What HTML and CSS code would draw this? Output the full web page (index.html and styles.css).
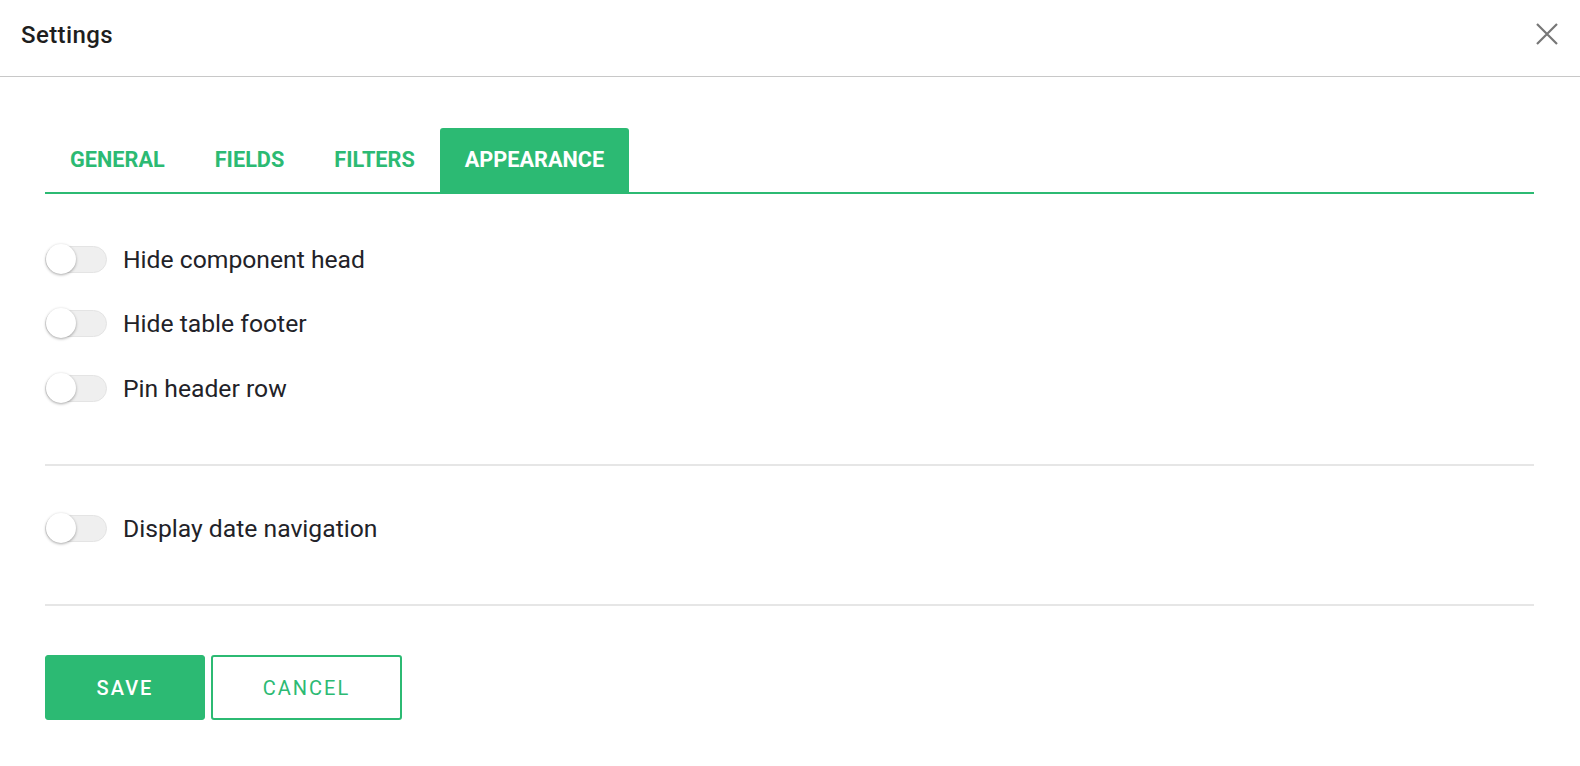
FILE: index.html
```html
<!DOCTYPE html>
<html lang="en">
<head>
  <meta charset="UTF-8" />
  <title>Settings</title>
  <link rel="stylesheet" href="styles.css">
</head>
<body>
  <header class="modal-head">
    <h2>Settings</h2>
    <button class="close-btn" aria-label="Close">
      <svg width="22" height="22" viewBox="0 0 22 22">
        <path d="M1 1 L21 21 M21 1 L1 21" stroke="#777" stroke-width="2.2" fill="none" />
      </svg>
    </button>
  </header>

  <div class="content">
    <nav class="tabs">
      <a href="#" class="tab">General</a>
      <a href="#" class="tab">Fields</a>
      <a href="#" class="tab">Filters</a>
      <a href="#" class="tab active">Appearance</a>
    </nav>

    <div class="section first">
      <label class="row"><span class="toggle"><span class="knob"></span></span>Hide component head</label>
      <label class="row"><span class="toggle"><span class="knob"></span></span>Hide table footer</label>
      <label class="row"><span class="toggle"><span class="knob"></span></span>Pin header row</label>
    </div>

    <div class="section">
      <label class="row"><span class="toggle"><span class="knob"></span></span>Display date navigation</label>
    </div>

    <div class="actions">
      <button class="btn save">Save</button>
      <button class="btn cancel">Cancel</button>
    </div>
  </div>
</body>
</html>
```

FILE: styles.css
```css
body {
  margin: 0;
  padding: 0;
  background: white;
  font-family: Roboto, "Liberation Sans", sans-serif;
  color: #222228;
}
.modal-head {
  height: 76px;
  display: flex;
  align-items: center;
  justify-content: space-between;
  padding: 0 22px 0 21px;
  border-bottom: 1px solid #c8c8c8;
}
.modal-head h2 {
  margin: 0;
  font-size: 24px;
  font-weight: 500;
  letter-spacing: 0.4px;
  color: #1e1e1e;
  margin-top: -6px;
}
.close-btn {
  background: none;
  border: none;
  padding: 0;
  width: 22px;
  height: 22px;
  cursor: pointer;
  margin-top: -8px;
}
.content {
  padding: 0 46px 0 45px;
}
.tabs {
  display: flex;
  margin-top: 51px;
  border-bottom: 2px solid #2cba73;
}
.tab {
  height: 64px;
  box-sizing: border-box;
  padding: 0 25px 2px;
  display: flex;
  align-items: center;
  text-decoration: none;
  text-transform: uppercase;
  font-size: 21.7px;
  font-weight: 700;
  color: #2cba73;
}
.tab.active {
  background: #2cba73;
  color: white;
  border-radius: 3px 3px 0 0;
}
.section {
  padding: 31px 0 43px;
  border-bottom: 2px solid #e6e6e6;
}
.section.first {
  padding-top: 33px;
}
.row {
  height: 64.5px;
  display: flex;
  align-items: center;
  font-size: 24.7px;
  cursor: pointer;
}
.toggle {
  position: relative;
  width: 62px;
  height: 27px;
  border-radius: 14px;
  background: #efefef;
  border: 1px solid #e4e4e4;
  box-sizing: border-box;
  margin-right: 16px;
}
.knob {
  position: absolute;
  left: 0;
  top: -3px;
  width: 30px;
  height: 30px;
  border-radius: 50%;
  background: white;
  box-shadow: 0 1px 3px rgba(0, 0, 0, 0.35);
}
.actions {
  display: flex;
  gap: 6px;
  margin-top: 49px;
}
.btn {
  height: 65px;
  border-radius: 3px;
  font-family: Roboto, "Liberation Sans", sans-serif;
  font-size: 20px;
  text-transform: uppercase;
  letter-spacing: 2px;
  cursor: pointer;
}
.save {
  width: 160px;
  background: #2cba73;
  border: 1px solid #2cba73;
  color: white;
  font-weight: 500;
}
.cancel {
  width: 191px;
  background: white;
  border: 2px solid #2cba73;
  color: #2cba73;
  font-weight: 400;
}
```
